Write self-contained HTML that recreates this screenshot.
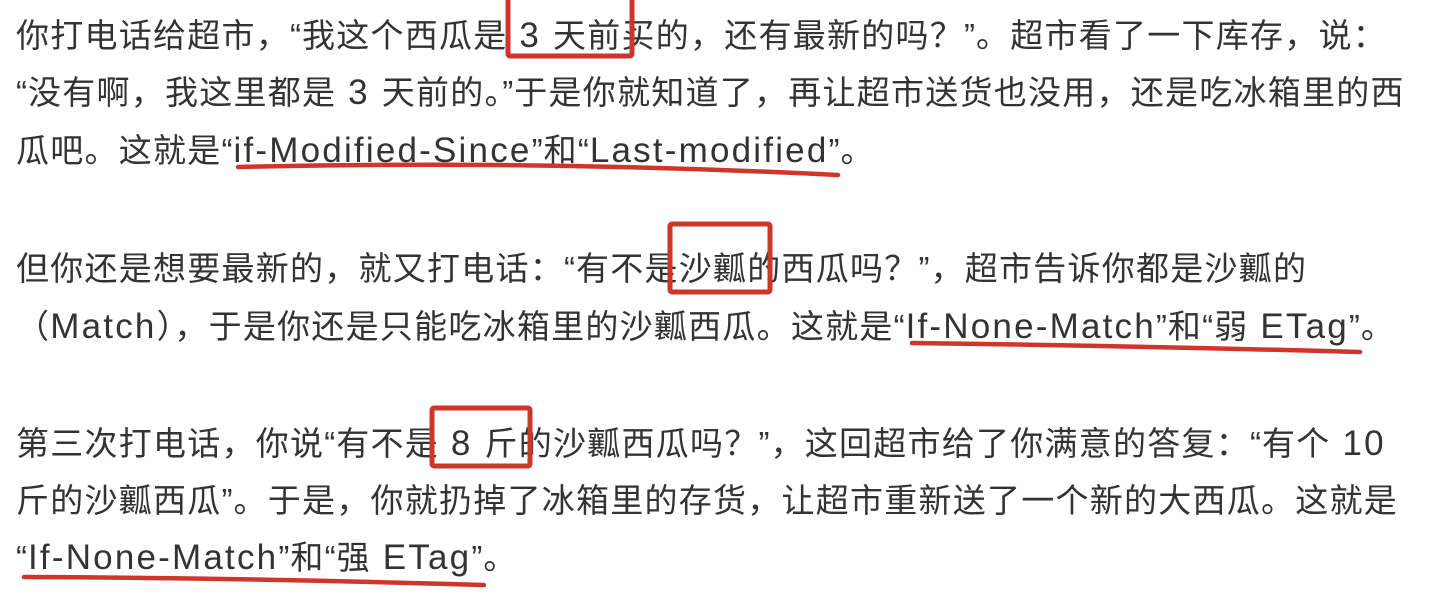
<!DOCTYPE html>
<html><head><meta charset="utf-8"><style>
html,body{margin:0;padding:0;background:#fff;width:1432px;height:606px;overflow:hidden}
.l{position:absolute;left:16px;white-space:nowrap;font-family:"Noto Sans CJK SC",sans-serif;font-size:33px;letter-spacing:1.25px;color:#333;line-height:40px}
.e{font-family:"Liberation Sans",sans-serif;font-size:35px;letter-spacing:2.2px}
.q{font-family:"Liberation Sans",sans-serif;font-size:33px;letter-spacing:1px}
svg{position:absolute;left:0;top:0}
</style></head><body>
<div class="l" style="top:13px">你打电话给超市，<span class="q">“</span>我这个西瓜是<span class="e"> 3 </span>天前买的，还有最新的吗？<span class="q">”</span>。超市看了一下库存，说：</div>
<div class="l" style="top:70px"><span class="q">“</span>没有啊，我这里都是<span class="e"> 3 </span>天前的。<span class="q">”</span>于是你就知道了，再让超市送货也没用，还是吃冰箱里的西</div>
<div class="l" style="top:128px">瓜吧。这就是<span class="q">“</span><span class="e">if-Modified-Since</span><span class="q">”</span>和<span class="q">“</span><span class="e">Last-modified</span><span class="q">”</span>。</div>
<div class="l" style="top:246px">但你还是想要最新的，就又打电话：<span class="q">“</span>有不是沙瓤的西瓜吗？<span class="q">”</span>，超市告诉你都是沙瓤的</div>
<div class="l" style="top:304px">（<span class="e">Match</span>），于是你还是只能吃冰箱里的沙瓤西瓜。这就是<span class="q">“</span><span class="e">If-None-Match</span><span class="q">”</span>和<span class="q">“</span>弱<span class="e"> ETag</span><span class="q">”</span>。</div>
<div class="l" style="top:421px">第三次打电话，你说<span class="q">“</span>有不是<span class="e"> 8 </span>斤的沙瓤西瓜吗？<span class="q">”</span>，这回超市给了你满意的答复：<span class="q">“</span>有个<span class="e"> 10</span></div>
<div class="l" style="top:478px">斤的沙瓤西瓜<span class="q">”</span>。于是，你就扔掉了冰箱里的存货，让超市重新送了一个新的大西瓜。这就是</div>
<div class="l" style="top:535px"><span class="q">“</span><span class="e">If-None-Match</span><span class="q">”</span>和<span class="q">“</span>强<span class="e"> ETag</span><span class="q">”</span>。</div>
<svg width="1432" height="606" fill="none" stroke="#d0352a" stroke-linecap="round">
<rect x="508" y="-4" width="124" height="60" rx="2" stroke-width="5"/>
<rect x="670" y="224" width="100" height="68" rx="2" stroke-width="5"/>
<rect x="432" y="408" width="98" height="58" rx="2" stroke-width="5"/>
<path d="M238 167 Q540 160 838 175" stroke-width="4.5"/>
<path d="M912 343 Q1140 346 1360 352" stroke-width="4.5"/>
<path d="M24 577 Q250 578 484 585" stroke-width="4.5"/>
</svg>
</body></html>
